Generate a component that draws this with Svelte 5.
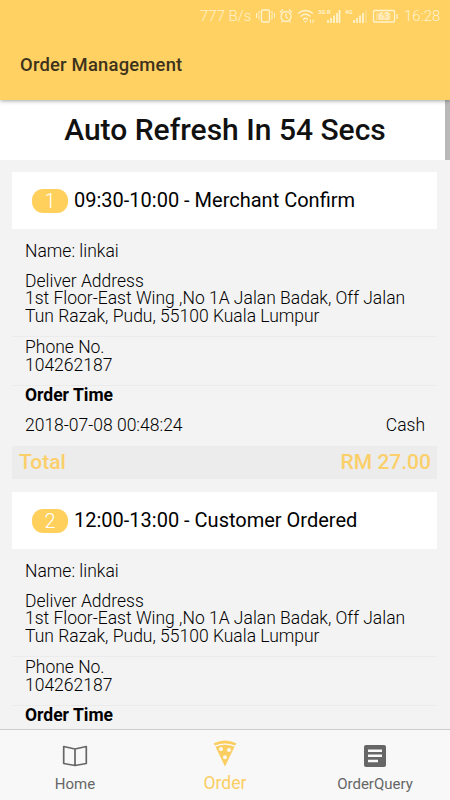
<script>
    let secs = 54

    const address = "1st Floor-East Wing ,No 1A Jalan Badak, Off Jalan Tun Razak, Pudu, 55100 Kuala Lumpur"

    let orders = [
        {no: 1, slot: "09:30-10:00", status: "Merchant Confirm", name: "linkai", address, phone: "104262187", time: "2018-07-08 00:48:24", pay: "Cash", total: "27.00"},
        {no: 2, slot: "12:00-13:00", status: "Customer Ordered", name: "linkai", address, phone: "104262187", time: "2018-07-08 00:48:24", pay: "Cash", total: "27.00"}
    ]

    let tabs = ["Home", "Order", "OrderQuery"]
    let current = "Order"
</script>

<main>
    <header>
        <div class="status">
            <span class="speed">777 B/s</span>
            <svg class="sys" width="149" height="20" viewBox="0 0 149 20" fill="none" stroke="currentColor" stroke-width="1.3">
                <!-- vibrate -->
                <rect x="6.500" y="4" width="8" height="12" rx="1" />
                <path d="M4 5v2.500l-1 1 1 1v4M1.500 7v5M17 5v2.500l1 1-1 1v4M19.500 7v5" stroke-width="1" />
                <!-- alarm -->
                <circle cx="31" cy="10.500" r="5" />
                <path d="M31 7.500v3.500l2 1.500M25 6.500l3-3M37 6.500l-3-3M27.500 15l-1 1.500M34.500 15l1 1.500" />
                <!-- wifi -->
                <path d="M43 7.500q7.500-6 15 0M45.500 10.500q5-4.500 10 0M48 13.500q2.500-2.500 5 0" />
                <path d="M49 14.500l1.500 2 1.500-2M55.500 13.500v3.500M58 13.500v3.500" stroke-width="1" />
                <!-- signals -->
                <path d="M73 14v3M76 12v5M79 9.500v7.500M82 7v10M84.500 4v13" stroke-width="1.800" />
                <path d="M99 14v3M102 12v5M105 9.500v7.500M108 7v10" stroke-width="1.800" />
                <path d="M111 4v13" opacity=".4" />
                <text x="63" y="8">3G R</text>
                <text x="90" y="8">4G</text>
                <!-- battery -->
                <rect x="118.500" y="4.500" width="21" height="11.500" rx="1" />
                <rect x="121" y="7" width="15" height="7" fill="currentColor" stroke="none" opacity=".35" />
                <path d="M142 8v5" />
                <text class="pct" x="123.500" y="14">63</text>
            </svg>
            <span class="clock">16:28</span>
        </div>
        <div class="title">Order Management</div>
    </header>

    <section class="content">
        <h1>Auto Refresh In {secs} Secs</h1>
        <div class="scrollbar"></div>

        {#each orders as order}
            <article>
                <div class="card-head">
                    <span class="badge">{order.no}</span>
                    <span class="slot">{order.slot} - {order.status}</span>
                </div>
                <div class="name">Name: {order.name}</div>
                <div class="address">Deliver Address<br />{order.address}</div>
                <div class="phone">Phone No.<br />{order.phone}</div>
                <div class="time-label">Order Time</div>
                <div class="time"><span>{order.time}</span><span>{order.pay}</span></div>
                <div class="total"><span>Total</span><span>RM {order.total}</span></div>
            </article>
        {/each}
    </section>

    <nav>
        {#each tabs as tab}
            <button class:active={tab === current} on:click={() => current = tab}>
                {#if tab === "Home"}
                    <svg width="28" height="28" viewBox="0 0 28 28" fill="none" stroke="currentColor" stroke-width="1.700" stroke-linejoin="round">
                        <path d="M14 7L2.700 4.500v17L14 23.500l11.300-2v-17zM14 7v16.500" />
                    </svg>
                {:else if tab === "Order"}
                    <svg width="28" height="28" viewBox="0 0 28 28" fill="currentColor">
                        <path d="M2.700 3.200Q14-2 25.300 3.200L24.300 5.500Q14 1.300 3.700 5.500z" />
                        <path d="M4.500 6.700Q14 3 23.500 6.700L14 26.500z" />
                        <g fill="#f8f8f8">
                            <circle cx="10" cy="9" r="2" />
                            <circle cx="18" cy="10" r="2" />
                            <circle cx="14" cy="17.300" r="2" />
                        </g>
                    </svg>
                {:else}
                    <svg width="28" height="28" viewBox="0 0 28 28" fill="currentColor">
                        <rect x="3" y="3" width="22" height="22" rx="2" />
                        <path d="M7 7.500h14V10H7zM7 12.500h14V15H7zM7 17.700h10v2.500H7z" fill="#f8f8f8" />
                    </svg>
                {/if}
                <span>{tab}</span>
            </button>
        {/each}
    </nav>
</main>

<style>
:global(body){
    background: #f3f3f3;
}

main{
    position: relative;
    display: flex;
    flex-direction: column;
    height: 800px;
    width: 450px;
    overflow: hidden;
    background: #f3f3f3;
    font-family: Roboto, sans-serif;
    color: #000;
}

header{
    position: relative;
    z-index: 2;
    flex: none;
    height: 100px;
    background: #ffd162;
    box-shadow: 0 1px 4px rgba(0, 0, 0, 0.35);
}

.status{
    display: flex;
    align-items: center;
    height: 31px;
    padding-left: 200px;
    color: #fff2ce;
    font-size: 15px;
    font-weight: 300;
    white-space: nowrap;
}

.speed{
    width: 55px;
    flex: none;
}

.sys{
    flex: none;
}

.sys text{
    fill: currentColor;
    stroke: none;
    font-size: 6px;
    font-weight: 700;
}

.sys .pct{
    font-size: 10px;
}

.title{
    padding: 23px 20px 0;
    font-size: 18.4px;
    line-height: 22px;
    font-weight: 500;
    letter-spacing: 0.22px;
    color: #3d321b;
}

.content{
    position: relative;
    flex: 1;
    min-height: 0;
    overflow: hidden;
}

h1{
    margin: 0 0 12px;
    height: 60px;
    line-height: 60px;
    background: #fff;
    text-align: center;
    font-size: 30px;
    font-weight: 500;
    color: #111;
}

.scrollbar{
    position: absolute;
    top: 0;
    right: 0;
    width: 5px;
    height: 60px;
    background: #b9b9b9;
}

article{
    margin: 0 13px 12px 12px;
    height: 308px;
    font-size: 17.5px;
    line-height: 17.5px;
    font-weight: 300;
}

.card-head{
    display: flex;
    align-items: center;
    height: 57px;
    padding-left: 20px;
    background: #fff;
}

.badge{
    width: 36px;
    height: 24px;
    margin-right: 6px;
    border-radius: 11px;
    background: #ffd05c;
    color: #fff;
    text-align: center;
    font-size: 20px;
    line-height: 25px;
}

.slot{
    padding-top: 1px;
    font-size: 20px;
    font-weight: 400;
}

.name{
    padding: 14px 13px 12px;
}

.address{
    padding: 0 13px 11px;
    border-bottom: 1px solid #ebebeb;
}

.phone{
    padding: 2px 13px 11px;
    border-bottom: 1px solid #ebebeb;
}

.time-label{
    padding: 1px 13px;
    font-weight: 700;
}

.time{
    display: flex;
    justify-content: space-between;
    padding: 11px 12px 12px 13px;
}

.total{
    display: flex;
    justify-content: space-between;
    padding: 0 6px 0 7px;
    height: 33px;
    line-height: 33px;
    background: #ececec;
    color: #fbcf69;
    font-size: 21px;
    font-weight: 500;
}

nav{
    z-index: 2;
    display: flex;
    flex: none;
    height: 71px;
    box-sizing: border-box;
    border-top: 1px solid #cdcdcd;
    background: #f8f8f8;
}

button{
    flex: 1;
    display: flex;
    flex-direction: column;
    align-items: center;
    padding: 12px 0 0;
    border: none;
    background: none;
    color: #666;
    font-family: inherit;
    font-size: 15px;
    font-weight: 400;
    cursor: pointer;
}

button span{
    margin-top: 5px;
    line-height: 18px;
}

button.active{
    padding-top: 10px;
    color: #fbce62;
    font-size: 17.5px;
}

button.active span{
    margin-top: 6px;
}
</style>
